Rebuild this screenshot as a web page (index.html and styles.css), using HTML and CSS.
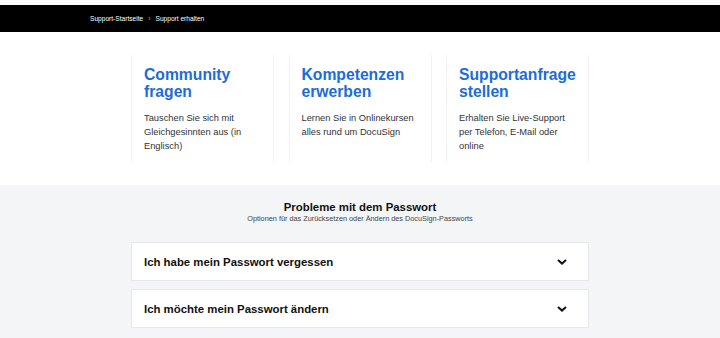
FILE: index.html
```html
<!DOCTYPE html>
<html lang="de">
<head>
    <meta charset="UTF-8">
    <meta name="viewport" content="width=device-width, initial-scale=1.0">
    <title>Support erhalten</title>
    <link rel="stylesheet" href="styles.css">
</head>
<body>
    <div class="topline"></div>

    <nav class="breadcrumb-bar">
        <div class="breadcrumb">
            <a href="#">Support-Startseite</a>
            <span class="sep">›</span>
            <span>Support erhalten</span>
        </div>
    </nav>

    <section class="cards-section">
        <div class="cards">
            <div class="card">
                <h2 class="card-title">Community fragen</h2>
                <p class="card-text">Tauschen Sie sich mit Gleichgesinnten aus (in Englisch)</p>
            </div>
            <div class="card">
                <h2 class="card-title">Kompetenzen erwerben</h2>
                <p class="card-text">Lernen Sie in Onlinekursen alles rund um DocuSign</p>
            </div>
            <div class="card">
                <h2 class="card-title">Supportanfrage stellen</h2>
                <p class="card-text">Erhalten Sie Live-Support per Telefon, E-Mail oder online</p>
            </div>
        </div>
    </section>

    <section class="faq-section">
        <div class="faq">
            <h3 class="faq-title">Probleme mit dem Passwort</h3>
            <p class="faq-subtitle">Optionen für das Zurücksetzen oder Ändern des DocuSign-Passworts</p>

            <div class="accordion">
                <span>Ich habe mein Passwort vergessen</span>
                <svg class="chevron" viewBox="0 0 10 6" width="10" height="6">
                    <path d="M1 1l4 3.6L9 1" fill="none" stroke="#111" stroke-width="2"/>
                </svg>
            </div>
            <div class="accordion">
                <span>Ich möchte mein Passwort ändern</span>
                <svg class="chevron" viewBox="0 0 10 6" width="10" height="6">
                    <path d="M1 1l4 3.6L9 1" fill="none" stroke="#111" stroke-width="2"/>
                </svg>
            </div>
        </div>
    </section>
</body>
</html>
```

FILE: styles.css
```css
* {
    margin: 0;
    padding: 0;
    box-sizing: border-box;
}

body {
    font-family: "Liberation Sans", Arial, sans-serif;
    background: #ffffff;
    color: #333;
}

.topline {
    height: 5px;
    background: #fafafa;
}

.breadcrumb-bar {
    background: #000;
    height: 27px;
    display: flex;
    align-items: center;
}

.breadcrumb {
    width: 540px;
    margin: 0 auto;
    font-size: 6.6px;
    color: #fff;
    display: flex;
    align-items: center;
    gap: 4px;
}

.breadcrumb a {
    color: #fff;
    text-decoration: none;
}

.breadcrumb .sep {
    color: #aaa;
    font-size: 7px;
    padding: 0 1px;
}

.cards-section {
    padding: 23px 0 23px;
}

.cards {
    width: 458px;
    margin: 0 auto;
    display: grid;
    grid-template-columns: repeat(3, 143px);
    justify-content: space-between;
}

.card {
    padding: 11px 12px 10px;
    border-left: 1px solid #f1f1f1;
    border-right: 1px solid #f1f1f1;
    height: 107px;
}

.card-title {
    color: #1c6cd9;
    font-size: 15.7px;
    line-height: 17px;
    font-weight: bold;
    margin-bottom: 11px;
}

.card-text {
    font-size: 9.3px;
    line-height: 14px;
    color: #333;
}

.faq-section {
    background: #f4f5f6;
    padding: 15px 0 12px;
    min-height: 153px;
}

.faq {
    width: 458px;
    margin: 0 auto;
}

.faq-title {
    text-align: center;
    font-size: 11.4px;
    line-height: 14px;
    font-weight: bold;
    color: #111;
}

.faq-subtitle {
    text-align: center;
    font-size: 7.3px;
    line-height: 10px;
    color: #444;
    margin-bottom: 18px;
}

.accordion {
    background: #fff;
    border: 1px solid #e7e8ea;
    height: 39px;
    padding: 0 21px 0 12px;
    display: flex;
    align-items: center;
    justify-content: space-between;
    font-size: 11.4px;
    font-weight: bold;
    color: #111;
    margin-bottom: 8px;
}

.chevron {
    display: block;
}
```
